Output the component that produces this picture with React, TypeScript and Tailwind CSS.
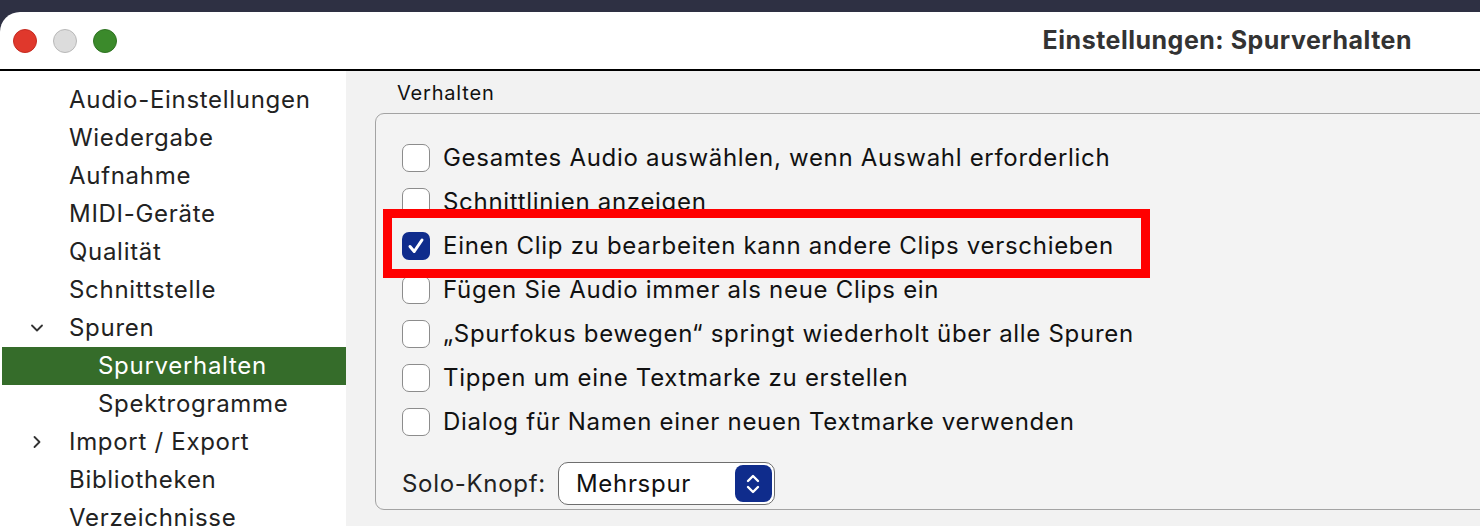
import { ChevronDown, ChevronRight } from 'lucide-react'

const font = { fontFamily: 'Inter, "Noto Sans", sans-serif' }

type NavItem = {
  label: string
  level: 0 | 1
  chevron?: 'down' | 'right'
  active?: boolean
}

const navItems: NavItem[] = [
  { label: 'Audio-Einstellungen', level: 0 },
  { label: 'Wiedergabe', level: 0 },
  { label: 'Aufnahme', level: 0 },
  { label: 'MIDI-Geräte', level: 0 },
  { label: 'Qualität', level: 0 },
  { label: 'Schnittstelle', level: 0 },
  { label: 'Spuren', level: 0, chevron: 'down' },
  { label: 'Spurverhalten', level: 1, active: true },
  { label: 'Spektrogramme', level: 1 },
  { label: 'Import / Export', level: 0, chevron: 'right' },
  { label: 'Bibliotheken', level: 0 },
  { label: 'Verzeichnisse', level: 0 },
]

const options = [
  { label: 'Gesamtes Audio auswählen, wenn Auswahl erforderlich', checked: false },
  { label: 'Schnittlinien anzeigen', checked: false },
  { label: 'Einen Clip zu bearbeiten kann andere Clips verschieben', checked: true },
  { label: 'Fügen Sie Audio immer als neue Clips ein', checked: false },
  { label: '„Spurfokus bewegen“ springt wiederholt über alle Spuren', checked: false },
  { label: 'Tippen um eine Textmarke zu erstellen', checked: false },
  { label: 'Dialog für Namen einer neuen Textmarke verwenden', checked: false },
]

function Checkbox({ checked }: { checked: boolean }) {
  if (checked) {
    return (
      <span className="flex size-[28px] shrink-0 items-center justify-center rounded-[7px] bg-[#0f2c8c]">
        <svg width="20" height="20" viewBox="0 0 20 20" fill="none">
          <path d="M4 10.5 L8.2 15.5 L16 4" stroke="white" strokeWidth="3" strokeLinecap="round" strokeLinejoin="round" />
        </svg>
      </span>
    )
  }
  return <span className="size-[28px] shrink-0 rounded-[7px] border-[1.5px] border-[#8c8c8c] bg-white" />
}

export default function App() {
  return (
    <div className="flex h-[526px] w-[1480px] flex-col overflow-hidden bg-[#2e3043]" style={font}>
      <div className="mt-[12px] flex flex-1 flex-col overflow-hidden rounded-tl-[20px] bg-white">
        {/* title bar */}
        <div className="flex h-[59px] shrink-0 items-center border-b-[2px] border-black pr-[68px]">
          <div className="flex items-center gap-[16px] pl-[13px]">
            <span className="size-[24px] rounded-full border border-[#c42a20] bg-[#e0382c]" />
            <span className="size-[24px] rounded-full border border-[#b8b8b8] bg-[#dcdcdc]" />
            <span className="size-[24px] rounded-full border border-[#2f7322] bg-[#3b8a2b]" />
          </div>
          <div className="ml-auto text-[25px] font-bold tracking-[0.5px] text-[#333333]">Einstellungen: Spurverhalten</div>
        </div>

        <div className="flex flex-1 overflow-hidden">
          {/* sidebar */}
          <div className="w-[346px] shrink-0 bg-white pt-[10px]">
            {navItems.map((item) => (
              <div
                key={item.label}
                className={`relative flex h-[38px] items-center text-[24px] tracking-[0.7px] ${
                  item.active ? 'ml-[2px] bg-[#356c2a] text-white' : 'text-[#222222]'
                }`}
              >
                {item.chevron && (
                  <span className="absolute left-[27px] top-[9px] text-[#333333]">
                    {item.chevron === 'down' ? (
                      <ChevronDown size={20} strokeWidth={2.2} />
                    ) : (
                      <ChevronRight size={20} strokeWidth={2.2} />
                    )}
                  </span>
                )}
                <span className={item.level === 1 ? (item.active ? 'pl-[96px]' : 'pl-[98px]') : 'pl-[69px]'}>
                  {item.label}
                </span>
              </div>
            ))}
          </div>

          {/* content */}
          <div className="flex-1 bg-[#f2f2f2] pl-[29px] pt-[10px]">
            <div className="h-[32px] pl-[22px] text-[20px] leading-[24px] tracking-[0.8px] text-[#111111]">Verhalten</div>
            <div className="relative -mr-[10px] rounded-[9px] border-[1.5px] border-[#a3a3a3] bg-[#f3f3f3] pb-[4px] pl-[26px] pt-[22px]">
              {options.map((o) => (
                <div key={o.label} className="flex h-[44px] items-center gap-[13px] text-[24px] tracking-[0.7px] text-[#111111]">
                  <Checkbox checked={o.checked} />
                  <span>{o.label}</span>
                </div>
              ))}
              <div className="mt-[18px] flex items-center">
                <span className="text-[24px] tracking-[0.7px] text-[#222222]">Solo-Knopf:</span>
                <div className="ml-[12px] flex h-[43px] w-[217px] items-center justify-between rounded-[10px] border-[1.5px] border-[#6e6e6e] bg-white pl-[17px] pr-[2px]">
                  <span className="text-[24px] tracking-[0.7px] text-[#111111]">Mehrspur</span>
                  <span className="flex h-[37px] w-[37px] items-center justify-center rounded-[8px] bg-[#0f2c8c]">
                    <svg width="16" height="24" viewBox="0 0 16 24" fill="none">
                      <path d="M3 9 L8 4 L13 9" stroke="white" strokeWidth="2.4" strokeLinecap="round" strokeLinejoin="round" />
                      <path d="M3 15 L8 20 L13 15" stroke="white" strokeWidth="2.4" strokeLinecap="round" strokeLinejoin="round" />
                    </svg>
                  </span>
                </div>
              </div>
              {/* annotation highlight */}
              <div className="pointer-events-none absolute left-[7px] top-[95px] h-[69px] w-[767px] border-[9px] border-[#ff0000]" />
            </div>
          </div>
        </div>
      </div>
    </div>
  )
}
